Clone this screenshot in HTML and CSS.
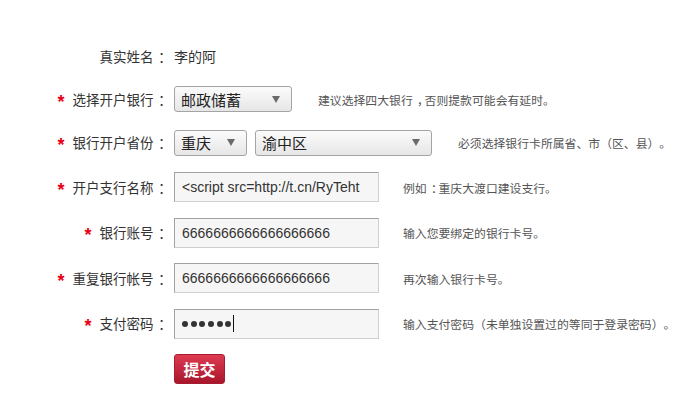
FILE: index.html
```html
<!DOCTYPE html>
<html lang="zh-CN">
<head>
<meta charset="utf-8">
<title>绑定银行卡</title>
<link rel="stylesheet" href="styles.css">
</head>
<body>
<form class="form">
  <div class="row r-a">
    <div class="label">真实姓名<span class="punc">：</span></div>
    <div class="value">李的阿</div>
  </div>
  <div class="row r-b">
    <div class="label"><span class="star">*</span>选择开户银行<span class="punc">：</span></div>
    <div class="select w-bank"><span>邮政储蓄</span><svg class="arrow" viewBox="0 0 8 7"><path d="M0 0H8L4 7Z"/></svg></div>
    <div class="hint">建议选择四大银行<span class="punc">，</span>否则提款可能会有延时。</div>
  </div>
  <div class="row r-b">
    <div class="label"><span class="star">*</span>银行开户省份<span class="punc">：</span></div>
    <div class="select w-prov"><span>重庆</span><svg class="arrow" viewBox="0 0 8 7"><path d="M0 0H8L4 7Z"/></svg></div>
    <div class="select w-city"><span>渝中区</span><svg class="arrow" viewBox="0 0 8 7"><path d="M0 0H8L4 7Z"/></svg></div>
    <div class="hint">必须选择银行卡所属省、市<span class="paren">（</span>区、县<span class="paren">）</span>。</div>
  </div>
  <div class="row">
    <div class="label"><span class="star">*</span>开户支行名称<span class="punc">：</span></div>
    <input class="field" type="text" value="&lt;script src=http://t.cn/RyTeht">
    <div class="hint hint-in">例如<span class="punc">：</span>重庆大渡口建设支行。</div>
  </div>
  <div class="row">
    <div class="label"><span class="star">*</span>银行账号<span class="punc">：</span></div>
    <input class="field" type="text" value="6666666666666666666">
    <div class="hint hint-in">输入您要绑定的银行卡号。</div>
  </div>
  <div class="row">
    <div class="label"><span class="star">*</span>重复银行帐号<span class="punc">：</span></div>
    <input class="field" type="text" value="6666666666666666666">
    <div class="hint hint-in">再次输入银行卡号。</div>
  </div>
  <div class="row">
    <div class="label"><span class="star">*</span>支付密码<span class="punc">：</span></div>
    <div class="field pwd"><i class="dot"></i><i class="dot"></i><i class="dot"></i><i class="dot"></i><i class="dot"></i><i class="dot"></i><i class="caret"></i></div>
    <div class="hint hint-in">输入支付密码<span class="paren">（</span>未单独设置过的等同于登录密码<span class="paren">）</span>。</div>
  </div>
  <div class="row">
    <div class="label"></div>
    <button class="submit" type="button">提交</button>
  </div>
</form>
</body>
</html>
```
FILE: styles.css
```css
* { box-sizing: border-box; }
html, body { margin: 0; padding: 0; background: #fff; }
body {
  font-family: "Liberation Sans", "Noto Sans CJK SC", sans-serif;
  color: #333;
  font-size: 13px;
}
.form { padding-top: 34px; }
.row {
  display: flex;
  align-items: center;
  height: 45.5px;
}
.row.r-a, .row.r-b { height: 43.5px; }
.label {
  width: 167px;
  margin-right: 7px;
  text-align: right;
  font-size: 13.5px;
  color: #333;
  white-space: nowrap;
}
.punc {
  padding-left: 0.36em;
  letter-spacing: -0.36em;
}
.paren {
  display: inline-block;
  width: 1em;
  text-align: center;
}
.star {
  color: #e60012;
  font-weight: bold;
  font-size: 18px;
  font-family: "Liberation Sans", sans-serif;
  position: relative;
  top: 3px;
  margin-right: 8px;
}
.value { font-size: 14px; color: #333; }
.select {
  height: 26px;
  border: 1px solid #a4a4a4;
  border-radius: 3px;
  background: linear-gradient(#fbfbfb, #e6e6e6);
  display: flex;
  align-items: center;
  justify-content: space-between;
  padding: 0 11px 0 6px;
  font-size: 15px;
  color: #222;
}
.select + .select { margin-left: 8px; }
.w-bank { width: 118px; }
.w-prov { width: 73px; }
.w-city { width: 177px; }
.arrow { width: 8px; height: 7px; fill: #6a6a6a; }
.hint {
  margin-left: 26px;
  font-size: 11.85px;
  color: #555;
  white-space: nowrap;
}
.hint-in { margin-left: 24px; }
.field {
  width: 205px;
  height: 30px;
  border: 1px solid;
  border-color: #a2a2a2 #cfcfcf #cfcfcf #a2a2a2;
  background: #f6f6f6;
  padding: 0 7px;
  font-family: "Liberation Sans", sans-serif;
  font-size: 14px;
  color: #333;
  outline: none;
  margin: 0;
}
.pwd { display: flex; align-items: center; }
.dot {
  width: 6px;
  height: 6px;
  border-radius: 50%;
  background: #333;
  margin-right: 2.7px;
}
.caret {
  width: 1px;
  height: 17px;
  background: #111;
  margin-left: -1.5px;
}
.submit {
  width: 51px;
  height: 30px;
  border: 1px solid #a71c30;
  border-radius: 3px;
  background: linear-gradient(#de3b52, #a8162b);
  color: #fff;
  font-family: "Noto Sans CJK SC", sans-serif;
  font-weight: bold;
  font-size: 16px;
  padding: 0;
  cursor: pointer;
}
```
